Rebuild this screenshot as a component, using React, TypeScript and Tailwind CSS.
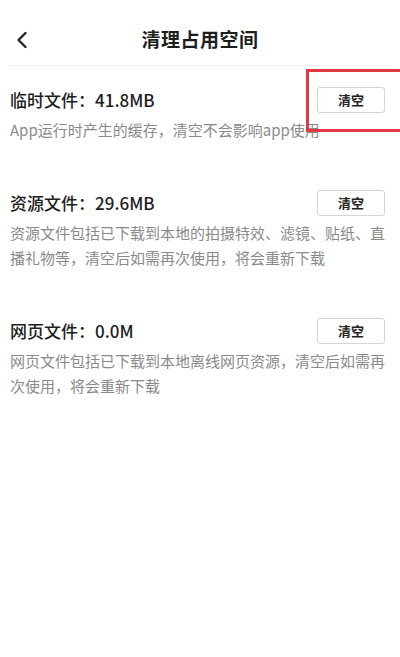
import { ChevronLeft } from 'lucide-react'

const cacheItems = [
  {
    id: 'temp',
    label: '临时文件：41.8MB',
    desc: 'App运行时产生的缓存，清空不会影响app使用',
  },
  {
    id: 'resource',
    label: '资源文件：29.6MB',
    desc: '资源文件包括已下载到本地的拍摄特效、滤镜、贴纸、直播礼物等，清空后如需再次使用，将会重新下载',
  },
  {
    id: 'web',
    label: '网页文件：0.0M',
    desc: '网页文件包括已下载到本地离线网页资源，清空后如需再次使用，将会重新下载',
  },
]

export default function App() {
  return (
    <div
      className="relative w-[400px] h-[657px] bg-white overflow-hidden"
      style={{ fontFamily: '"Noto Sans CJK SC", "Noto Sans", sans-serif' }}
    >
      {/* Header */}
      <header className="relative h-[66px] flex items-center justify-center border-b border-[#f0f0f0] mx-[8px]">
        <button className="absolute left-[0px] top-[26px] text-[#222]">
          <ChevronLeft className="w-[28px] h-[28px]" strokeWidth={2} />
        </button>
        <h1 className="text-[19px] font-bold text-[#1e1e1e] tracking-[0.5px] mt-[14px]">清理占用空间</h1>
      </header>

      {/* Cache list */}
      <div className="pt-[21px] px-[10px]">
        {cacheItems.map((item) => (
          <div key={item.id} className="mb-[48px]">
            <div className="flex items-center justify-between h-[26px]">
              <span className="text-[17px] font-medium text-[#1e1e1e]">{item.label}</span>
              <button className="w-[68px] h-[26px] mr-[5px] border border-[#d4d4d4] rounded-[3px] text-[13px] font-bold text-[#222] flex items-center justify-center">
                清空
              </button>
            </div>
            <p className="mt-[4px] text-[15px] leading-[25px] text-[#8a8a8a]">{item.desc}</p>
          </div>
        ))}
      </div>

      {/* Highlight frame around the first clear button */}
      <div className="absolute left-[306px] top-[69px] w-[110px] h-[63px] border-[3px] border-[#e2383f]" />
    </div>
  )
}
